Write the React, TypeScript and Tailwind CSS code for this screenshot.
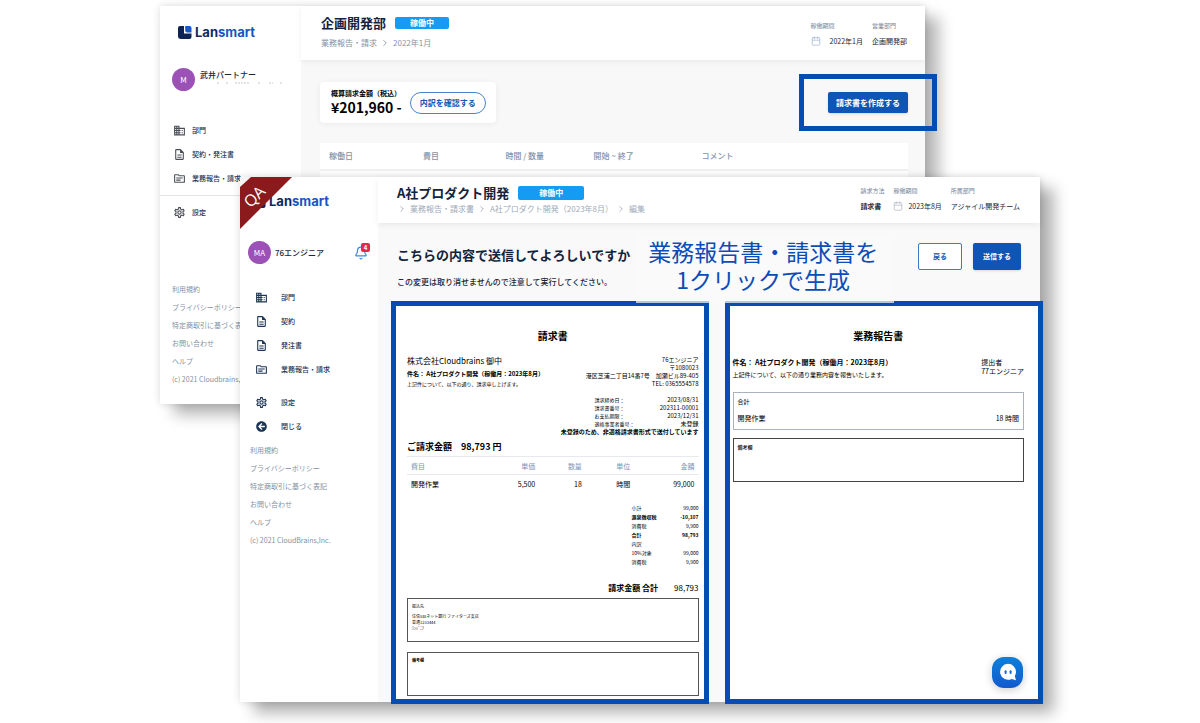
import type { ReactNode } from 'react';
import { Bell, Calendar, ChevronRight } from 'lucide-react';
import { FaArrowCircleLeft } from 'react-icons/fa';
import { MdDomain, MdOutlineDescription, MdOutlineSettings, MdOutlineTopic } from 'react-icons/md';

const footerLinks = ['利用規約', 'プライバシーポリシー', '特定商取引に基づく表記', 'お問い合わせ', 'ヘルプ'];

const invoiceMeta = [
  { label: '請求締め日：', value: '2023/08/31' },
  { label: '請求書番号：', value: '202311-00001' },
  { label: 'お支払期限：', value: '2023/12/31' },
  { label: '適格事業者番号：', value: '未登録' },
];

const totals = [
  { label: '小計', value: '99,000' },
  { label: '源泉徴収税', value: '-10,107', bold: true },
  { label: '消費税', value: '9,900' },
  { label: '合計', value: '98,793', bold: true },
  { label: '内訳', value: '' },
  { label: '10%対象', value: '99,000' },
  { label: '消費税', value: '9,900' },
];

function Logo() {
  return (
    <div className="flex h-[13px] items-center gap-[3px]">
      <svg viewBox="0 0 14 13" className="h-[13px] w-[14px]" aria-hidden="true">
        <path d="M2 0h4v7.5h7.5V11a2 2 0 0 1-2 2H3a3 3 0 0 1-3-3V2a2 2 0 0 1 2-2z" fill="#0c2354" />
        <path d="M7.2 0H11.500a2 2 0 0 1 2 2v4.500H9.200a2 2 0 0 1-2-2z" fill="#1459c4" />
      </svg>
      <span className="font-[Inter,sans-serif] text-[13px] leading-[13px] font-bold text-[#0e2a5e]">
        Lan<span className="text-[#1457c0]">smart</span>
      </span>
    </div>
  );
}

function NavItem({ icon, label, wide = false }: { icon: ReactNode; label: string; wide?: boolean }) {
  return (
    <a
      href="#"
      className={`flex h-6 items-center text-[7px] font-medium whitespace-nowrap text-[#1d3557] ${wide ? 'gap-[13px]' : 'gap-[6px]'}`}
    >
      {icon}
      {label}
    </a>
  );
}

function FooterLinks({ copyright }: { copyright: string }) {
  return (
    <div className="flex flex-col text-[7px] whitespace-nowrap text-[#8290a3]">
      {footerLinks.map((link) => (
        <a key={link} href="#" className="flex h-[18px] items-center">
          {link}
        </a>
      ))}
      <small className="flex h-[18px] items-center text-[7px]">{copyright}</small>
    </div>
  );
}

function Field({ label, children }: { label: string; children: ReactNode }) {
  return (
    <div>
      <div className="text-[6px] leading-[8px] text-[#75849a]">{label}</div>
      <div className="mt-[5px] flex h-[12px] items-center text-[7px] text-[#1a2638]">{children}</div>
    </div>
  );
}

function Crumb({ children }: { children: ReactNode }) {
  return (
    <>
      <ChevronRight className="size-[10px] shrink-0" strokeWidth={2} />
      <span>{children}</span>
    </>
  );
}

function ListWindow() {
  return (
    <section className="col-start-1 row-start-1 mr-[115px] flex self-start bg-white shadow-[14px_11px_14px_rgba(0,0,0,0.28),0_0_8px_rgba(0,0,0,0.14)]">
      <aside className="w-[141px] shrink-0 pb-4">
        <div className="pt-5 pl-[18px]">
          <Logo />
        </div>
        <div className="mt-[29px] flex gap-[5px] pl-3">
          <span className="flex size-[23px] items-center justify-center rounded-full bg-[#9b51b5] text-[8px] text-white">M</span>
          <div>
            <div className="text-[8px] leading-[14px] font-medium text-[#1a2638]">武井パートナー</div>
            <svg viewBox="0 0 86 2" className="h-[2px] w-[86px]" aria-hidden="true">
              <path d="M17 1h2M26 1h2M35 1h14M58 1h2M69 1h4M80 1h2" stroke="#c3c8ce" strokeWidth="1" strokeDasharray="2 1" />
            </svg>
          </div>
        </div>
        <nav className="mt-[27px]">
          <div className="pl-[13px]">
            <NavItem icon={<MdDomain className="size-[13px] text-[#4a4f58]" />} label="部門" />
            <NavItem icon={<MdOutlineDescription className="size-[13px] text-[#4a4f58]" />} label="契約・発注書" />
            <NavItem icon={<MdOutlineTopic className="size-[13px] text-[#4a4f58]" />} label="業務報告・請求" />
          </div>
          <div className="mt-[5px] border-t border-[#e2e4e8] pt-1 pl-[13px]">
            <NavItem icon={<MdOutlineSettings className="size-[13px] text-[#4a4f58]" />} label="設定" />
          </div>
        </nav>
        <div className="mt-14 pl-3">
          <FooterLinks copyright="(c) 2021 Cloudbrains,Inc." />
        </div>
      </aside>

      <div className="min-w-0 flex-1 bg-[#f8f8f8]">
        <header className="flex h-[54px] justify-between bg-white pr-[18px] pl-5 shadow-[0_2px_6px_rgba(0,0,0,0.06)]">
          <div>
            <div className="flex items-center gap-[9px] pt-[7px]">
              <h1 className="text-[13px] leading-[20px] font-bold text-[#14233c]">企画開発部</h1>
              <span className="flex h-[12px] w-[54px] items-center justify-center rounded-[2px] bg-[#149cf2] text-[8px] font-bold text-white">稼働中</span>
            </div>
            <div className="mt-1 flex items-center gap-[3px] text-[8px] leading-[12px] text-[#8492a8]">
              <span>業務報告・請求</span>
              <Crumb>2022年1月</Crumb>
            </div>
          </div>
          <div className="flex gap-[9px] pt-4">
            <Field label="稼働期間">
              <Calendar className="mr-[9px] size-[10px] text-[#a9bdd8]" strokeWidth={2} />
              2022年1月
            </Field>
            <Field label="営業部門">企画開発部</Field>
          </div>
        </header>

        <div className="pt-[22px] pr-[17px] pl-[19px]">
          <div className="flex items-start justify-between">
            <div className="flex h-[41px] items-center gap-[8px] rounded-[4px] bg-white pr-[10px] pl-[11px] shadow-[0_1px_6px_rgba(0,0,0,0.06)]">
              <div className="text-black">
                <div className="text-[7px] leading-[9px] font-bold">概算請求金額（税込）</div>
                <div className="text-[14px] leading-[18px] font-bold">¥201,960 -</div>
              </div>
              <button className="flex h-[22px] w-[76px] items-center justify-center rounded-full border border-[#4a83cb] text-[8px] font-bold text-[#1257b5]">
                内訳を確認する
              </button>
            </div>
            <div className="relative mt-[10px] flex">
              <button className="h-[21px] w-20 rounded-[2px] bg-[#0f55b5] text-[8px] font-bold text-white shadow">請求書を作成する</button>
              <div className="pointer-events-none absolute -inset-x-[29px] -inset-y-[18px] border-5 border-[#064db3]" />
            </div>
          </div>

          <table className="mt-5 w-full table-fixed bg-white text-left text-[8px] text-[#8492a8]">
            <thead>
              <tr className="h-[27px] border-b-2 border-[#f0f1f3]">
                <th className="w-[16%] pl-[9px] font-medium">稼働日</th>
                <th className="w-[14%] pl-[9px] font-medium">費目</th>
                <th className="w-[15%] pl-[9px] font-medium">時間 / 数量</th>
                <th className="w-[18%] pl-[9px] font-medium">開始 ~ 終了</th>
                <th className="pl-[11px] font-medium">コメント</th>
              </tr>
            </thead>
            <tbody>
              <tr className="h-12">
                <td colSpan={5} />
              </tr>
            </tbody>
          </table>
        </div>
      </div>
    </section>
  );
}

function InvoiceDoc() {
  return (
    <article className="min-w-0 flex-1 border-5 border-[#064db3] bg-white pr-[5px] pb-[3px] pl-[11px] text-black">
      <h3 className="pt-[23px] text-center text-[10px] leading-[14px] font-bold">請求書</h3>
      <div className="mt-[11px] flex justify-between whitespace-nowrap">
        <div className="pt-[1px]">
          <p className="text-[8px] leading-[12px]">株式会社Cloudbrains 御中</p>
          <p className="mt-[2px] text-[6px] leading-[10px] font-bold">件名： A社プロダクト開発（稼働月：2023年8月）</p>
          <p className="text-[5px] leading-[10px]">上記件について、以下の通り、請求申し上げます。</p>
        </div>
        <div className="-ml-10 pt-[2px] text-right text-[6px] leading-[8px]">
          <p>76エンジニア</p>
          <p>〒1080023</p>
          <p>港区芝浦二丁目14番7号　加瀬ビル89-405</p>
          <p>TEL: 0365554578</p>
        </div>
      </div>
      <dl className="mt-[7px] ml-auto w-[104px] text-[6px] leading-[8px]">
        {invoiceMeta.map((row) => (
          <div key={row.label} className="flex justify-between whitespace-nowrap">
            <dt className="text-[5px]">{row.label}</dt>
            <dd>{row.value}</dd>
          </div>
        ))}
      </dl>
      <p className="text-right text-[6px] leading-[8px] font-bold">未登録のため、非適格請求書形式で送付しています</p>
      <p className="mt-1 text-[9px] leading-[14px] font-bold">ご請求金額　98,793 円</p>

      <table className="mt-[2px] w-full text-[7px] leading-[10px]">
        <thead className="border-y border-[#e6e9ee] text-[#7c93b8]">
          <tr className="h-[18px]">
            <th className="w-[29%] pl-[4px] text-left font-normal">費目</th>
            <th className="w-[15%] text-right font-normal">単価</th>
            <th className="w-[16%] text-right font-normal">数量</th>
            <th className="w-[18%] pr-[4px] text-right font-normal">単位</th>
            <th className="pr-[4px] text-right font-normal">金額</th>
          </tr>
        </thead>
        <tbody>
          <tr className="h-[18px]">
            <td className="pl-[4px]">開発作業</td>
            <td className="text-right">5,500</td>
            <td className="text-right">18</td>
            <td className="pr-[4px] text-right">時間</td>
            <td className="pr-[4px] text-right">99,000</td>
          </tr>
        </tbody>
      </table>

      <dl className="mt-[10px] ml-auto w-[67px] text-[5px] leading-[9px]">
        {totals.map((row, i) => (
          <div key={i} className={`flex justify-between ${row.bold ? 'font-bold' : ''}`}>
            <dt>{row.label}</dt>
            <dd>{row.value}</dd>
          </div>
        ))}
      </dl>
      <p className="mt-4 flex justify-end gap-4 text-[8px] leading-[12px]">
        <span className="font-bold">請求金額 合計</span>
        <span>98,793</span>
      </p>
      <div className="mt-1 h-[44px] border border-[#555] px-[4px] pt-[4px] text-[4px] leading-[6px]">
        <p>振込先</p>
        <p className="mt-1">住信SBIネット銀行 ファイターズ支店</p>
        <p>普通1233444</p>
        <p>ｴﾝｼﾞﾆｱ</p>
      </div>
      <div className="mt-[10px] h-[44px] border border-[#555] px-[4px] pt-[4px] text-[4px] leading-[6px] font-bold">備考欄</div>
    </article>
  );
}

function ReportDoc() {
  return (
    <article className="min-w-0 flex-1 border-5 border-[#064db3] bg-white pr-[14px] pl-[3px] text-black">
      <h3 className="pt-[23px] text-center text-[10px] leading-[14px] font-bold">業務報告書</h3>
      <div className="mt-[13px] flex justify-between whitespace-nowrap">
        <div>
          <p className="text-[7px] leading-[12px] font-bold">件名： A社プロダクト開発（稼働月：2023年8月）</p>
          <p className="mt-[2px] text-[6px] leading-[10px]">上記件について、以下の通り業務内容を報告いたします。</p>
        </div>
        <div className="pt-[2px] text-[7px] leading-[9px]">
          <p>提出者</p>
          <p>77エンジニア</p>
        </div>
      </div>
      <div className="mt-3 h-[38px] border border-[#a9b3bf] px-[4px] pt-[4px] text-[7px]">
        <p className="text-[6px] leading-[10px]">合計</p>
        <p className="mt-[6px] flex justify-between leading-[10px]">
          <span>開発作業</span>
          <span>18 時間</span>
        </p>
      </div>
      <div className="mt-2 h-[44px] border border-[#444] px-[4px] pt-[4px] text-[5px] leading-[8px] font-medium">備考欄</div>
    </article>
  );
}

function ConfirmWindow() {
  return (
    <section className="relative col-start-1 row-start-1 mt-[171px] ml-20 flex self-start bg-white shadow-[14px_11px_14px_rgba(0,0,0,0.3),0_0_8px_rgba(0,0,0,0.14)]">
      <aside className="w-[138px] shrink-0">
        <div className="pt-[18px] pl-3">
          <Logo />
        </div>
        <div className="mt-[33px] flex items-center gap-[4px] pr-[10px] pl-2">
          <span className="flex size-[23px] items-center justify-center rounded-full bg-[#9b51b5] text-[8px] text-white">MA</span>
          <span className="text-[8px] font-medium text-[#1a2638]">76エンジニア</span>
          <button className="relative ml-auto" aria-label="通知">
            <Bell className="size-[14px] text-[#3d86d8]" strokeWidth={2} />
            <span className="absolute -top-[3px] -right-[2px] flex size-[9px] items-center justify-center rounded-[2px] bg-[#e8264d] text-[6px] font-bold text-white">4</span>
          </button>
        </div>
        <nav className="mt-[21px] pl-[15px]">
          <NavItem wide icon={<MdDomain className="size-[13px]" />} label="部門" />
          <NavItem wide icon={<MdOutlineDescription className="size-[13px]" />} label="契約" />
          <NavItem wide icon={<MdOutlineDescription className="size-[13px]" />} label="発注書" />
          <NavItem wide icon={<MdOutlineTopic className="size-[13px]" />} label="業務報告・請求" />
          <div className="mt-[9px]">
            <NavItem wide icon={<MdOutlineSettings className="size-[13px]" />} label="設定" />
            <NavItem wide icon={<FaArrowCircleLeft className="mx-px size-[11px]" />} label="閉じる" />
          </div>
        </nav>
        <div className="mt-[3px] pl-[10px]">
          <FooterLinks copyright="(c) 2021 CloudBrains,Inc." />
        </div>
      </aside>

      {/* environment ribbon */}
      <svg viewBox="0 0 52 52" className="absolute top-0 left-0 size-[52px]" aria-hidden="true">
        <polygon points="0,0 12,0 0,11" fill="#f4f4f4" />
        <polygon points="11,0 52,0 0,52 0,10" fill="#8a1a1c" />
        <text x="15" y="25" textAnchor="middle" fill="#fff" fontSize="16" fontFamily="Open Sans, sans-serif" transform="rotate(-45 15 20)">
          QA
        </text>
      </svg>

      <div className="min-w-0 flex-1 bg-[#f9f9f9]">
        <header className="flex h-[46px] justify-between bg-white pr-5 pl-[19px] shadow-[0_2px_6px_rgba(0,0,0,0.07)]">
          <div>
            <div className="flex items-center gap-[9px] pt-[6px]">
              <h1 className="text-[13px] leading-[20px] font-bold text-[#14233c]">A社プロダクト開発</h1>
              <span className="flex h-[14px] w-[66px] items-center justify-center rounded-[2px] bg-[#149cf2] text-[8px] font-bold text-white">稼働中</span>
            </div>
            <div className="flex items-center gap-[3px] text-[8px] leading-[12px] text-[#a0abba]">
              <Crumb>業務報告・請求書</Crumb>
              <Crumb>A社プロダクト開発（2023年8月）</Crumb>
              <Crumb>編集</Crumb>
            </div>
          </div>
          <div className="flex gap-[9px] pt-[10px]">
            <Field label="請求方法">
              <span className="font-bold">請求書</span>
            </Field>
            <Field label="稼働期間">
              <Calendar className="mr-[5px] size-[10px] text-[#b9bfc8]" strokeWidth={2} />
              2023年8月
            </Field>
            <Field label="所属部門">アジャイル開発チーム</Field>
          </div>
        </header>

        <div className="relative">
          <div className="flex items-start justify-between pt-5 pr-[19px] pl-[19px] whitespace-nowrap">
            <div>
              <h2 className="text-[13px] leading-[24px] font-bold text-[#14233c]">こちらの内容で送信してよろしいですか</h2>
              <p className="mt-[9px] text-[8px] leading-[12px] font-medium text-[#1a2638]">この変更は取り消せませんので注意して実行してください。</p>
            </div>
            <div className="flex gap-[11px]">
              <button className="h-[27px] w-[44px] rounded-[2px] border border-[#3f7bbf] bg-white text-[7px] font-bold text-[#1257b5]">戻る</button>
              <button className="h-[27px] w-12 rounded-[2px] bg-[#0f55b5] text-[7px] font-bold text-white shadow">送信する</button>
            </div>
          </div>
          <div className="mt-[13px] -mr-[3px] -mb-[2px] ml-[13px] flex gap-4">
            <InvoiceDoc />
            <ReportDoc />
          </div>
          <p className="absolute top-[11px] left-[39%] h-[69px] w-[258px] bg-[#fbfbfb]/70 pt-[3px] pr-1 text-center text-[23px] leading-[28px] whitespace-nowrap text-[#0a4cb8]">
            業務報告書・請求書を
            <br />
            1クリックで生成
          </p>
        </div>
      </div>

      <button
        className="absolute right-[17px] bottom-[14px] flex size-[31px] items-center justify-center rounded-[12px] bg-linear-to-b from-[#0f80d8] to-[#1259cf] shadow-[0_2px_8px_rgba(0,0,0,0.2)]"
        aria-label="チャット"
      >
        <svg viewBox="0 0 18 18" className="size-[18px]" aria-hidden="true">
          <path d="M9 .8a8 8 0 0 1 8 8c0 1.700-.5 3-1.200 4.200L17 17.200l-4.400-1.200A8 8 0 1 1 9 .8z" fill="#fff" />
          <rect x="5.600" y="7.200" width="2" height="3.800" rx="1" fill="#1468cf" />
          <rect x="10.600" y="7.200" width="2" height="3.800" rx="1" fill="#1468cf" />
        </svg>
      </button>
    </section>
  );
}

export default function App() {
  return (
    <main lang="ja" className="grid min-h-screen bg-white px-40 pt-[6px] font-['Noto_Sans_CJK_JP',sans-serif]">
      <ListWindow />
      <ConfirmWindow />
    </main>
  );
}
